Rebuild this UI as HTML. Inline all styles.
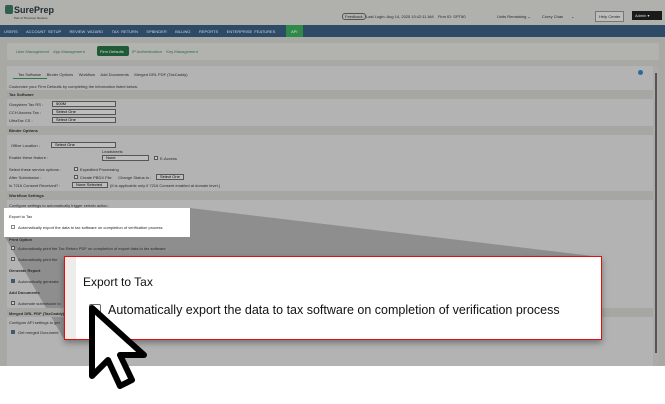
<!DOCTYPE html>
<html><head><meta charset="utf-8"><style>
*{margin:0;padding:0;box-sizing:border-box}
body{width:665px;height:404px;background:#fff;font-family:"Liberation Sans",sans-serif;position:relative;overflow:hidden}
.a{position:absolute}
.t{font-size:4px;color:#2a2a2a;white-space:nowrap}
.sel{position:absolute;height:6px;border:1px solid #555;background:#bdbdbd;font-size:4px;padding-left:3px;line-height:4px}
.cb{position:absolute;width:4px;height:4px;border:1px solid #555;background:#ccc}
</style></head><body>
<div class="a" style="left:0;top:0;width:665px;height:366px;background:#a8a8a4"></div>
<div class="a" style="left:0;top:0;width:665px;height:25px;background:#b0b0ac"></div>
<div class="a" style="left:5px;top:5px;width:8px;height:9px;border-radius:2px;background:#2f5f4f"></div>
<div class="a" style="left:14px;top:5px;font-size:9px;font-weight:bold;color:#1e2a2e">SurePrep</div>
<div class="a t" style="left:14px;top:16px;font-size:3px">Part of Thomson Reuters</div>
<div class="a t" style="left:342px;top:13px;border:1px solid #555;border-radius:3px;padding:0 2px">Feedback</div>
<div class="a t" style="left:366px;top:14px">Last Login: Aug 14, 2025 10:42:11 AM &nbsp;&nbsp; Firm ID: SPT80</div>
<div class="a t" style="left:497px;top:14px">Units Remaining ⌄ &nbsp;&nbsp;&nbsp;&nbsp;&nbsp;&nbsp;&nbsp;&nbsp; Corey Chan &nbsp;&nbsp;&nbsp;&nbsp;&nbsp; ⌄</div>
<div class="a t" style="left:595px;top:11px;border:1px solid #777;padding:2px 3px;background:#bcbcb8">Help Center</div>
<div class="a t" style="left:632px;top:11px;background:#1a1a1a;color:#ddd;padding:2px 3px;width:30px">Admin ▾</div>
<div class="a" style="left:0;top:25px;width:665px;height:12px;background:#2d4a66"></div>
<div class="a t" style="left:4px;top:29px;color:#d0d6dc;word-spacing:1px">USERS &nbsp;&nbsp; ACCOUNT SETUP &nbsp;&nbsp; REVIEW WIZARD &nbsp;&nbsp; TAX RETURN &nbsp;&nbsp; SPBINDER &nbsp;&nbsp; BILLING &nbsp;&nbsp; REPORTS &nbsp;&nbsp; ENTERPRISE FEATURES</div>
<div class="a" style="left:286px;top:25px;width:17px;height:12px;background:#2f8a4a"></div>
<div class="a t" style="left:291px;top:29px;color:#ddd">API</div>
<div class="a" style="left:7px;top:43px;width:652px;height:17px;background:#b2b2ae;border-radius:2px"></div>
<div class="a t" style="left:16px;top:49px;color:#2f6a4a">User Management &nbsp;&nbsp; App Management</div>
<div class="a" style="left:97px;top:46px;width:32px;height:10px;background:#1f5a36;border-radius:2px"></div>
<div class="a t" style="left:100px;top:49px;color:#ddd">Firm Defaults</div>
<div class="a t" style="left:132px;top:49px;color:#2f6a4a">IP Authentication &nbsp;&nbsp; Key Management</div>
<div class="a" style="left:7px;top:66px;width:646px;height:300px;background:#b3b3b3"></div>
<div class="a" style="left:653px;top:66px;width:6px;height:300px;background:#ababab"></div>
<div class="a" style="left:655px;top:73px;width:2px;height:280px;background:#555"></div>
<div class="a t" style="left:18px;top:72px">Tax Software &nbsp;&nbsp;&nbsp; Binder Options &nbsp;&nbsp;&nbsp; Workflow &nbsp;&nbsp;&nbsp; Add Documents &nbsp;&nbsp;&nbsp; Merged DRL PDF (TaxCaddy)</div>
<div class="a" style="left:13px;top:78px;width:34px;height:1px;background:#2f7a4a"></div>
<div class="a" style="left:638px;top:70px;width:5px;height:5px;border-radius:50%;background:#2a6a9a"></div>
<div class="a t" style="left:9px;top:84px">Customize your Firm Defaults by completing the information listed below.</div>
<div class="a" style="left:7px;top:90px;width:646px;height:9px;background:#a6a6a2"></div>
<div class="a t" style="left:9px;top:92px;font-weight:bold">Tax Software</div>
<div class="a t" style="left:9px;top:102px">Gosystem Tax RS :</div><div class="sel" style="left:52px;top:101px;width:64px">500M</div>
<div class="a t" style="left:9px;top:110px">CCH Axcess Tax :</div><div class="sel" style="left:52px;top:109px;width:64px">Select One</div>
<div class="a t" style="left:9px;top:118px">UltraTax CS :</div><div class="sel" style="left:52px;top:117px;width:64px">Select One</div>
<div class="a" style="left:7px;top:126px;width:646px;height:9px;background:#a6a6a2"></div>
<div class="a t" style="left:9px;top:128px;font-weight:bold">Binder Options</div>
<div class="a t" style="left:11px;top:143px">Office Location :</div><div class="sel" style="left:51px;top:142px;width:65px">Select One</div>
<div class="a t" style="left:9px;top:155px">Enable these feature :</div>
<div class="a t" style="left:102px;top:149px">Leadsheets</div><div class="sel" style="left:102px;top:155px;width:47px">None</div>
<div class="cb" style="left:154px;top:156px"></div><div class="a t" style="left:160px;top:156px">E-Access</div>
<div class="a t" style="left:9px;top:167px">Select these service options :</div>
<div class="cb" style="left:74px;top:167px"></div><div class="a t" style="left:80px;top:167px">Expedited Processing</div>
<div class="a t" style="left:9px;top:175px">After Submission :</div>
<div class="cb" style="left:74px;top:175px"></div><div class="a t" style="left:80px;top:175px">Create PBDX File &nbsp;&nbsp;&nbsp;&nbsp; Change Status to :</div>
<div class="sel" style="left:156px;top:174px;width:28px">Select One</div>
<div class="a t" style="left:9px;top:183px">Is 7216 Consent Received? :</div>
<div class="sel" style="left:72px;top:182px;width:36px">None Selected</div>
<div class="a t" style="left:110px;top:183px">(It is applicable only if 7216 Consent enabled at domain level.)</div>
<div class="a" style="left:7px;top:191px;width:646px;height:9px;background:#a6a6a2"></div>
<div class="a t" style="left:9px;top:193px;font-weight:bold">Workflow Settings</div>
<div class="a t" style="left:9px;top:203px">Configure settings to automatically trigger certain action.</div>
<svg class="a" style="left:0;top:0" width="665" height="404"><polygon points="5,237 190,208 601,257 64,339" fill="#8e8e8e"/></svg>
<div class="a t" style="left:9px;top:237px;font-weight:bold">Print Option</div>
<div class="cb" style="left:11px;top:246px"></div><div class="a t" style="left:18px;top:246px">Automatically print the Tax Return PDF on completion of export data to tax software</div>
<div class="cb" style="left:11px;top:257px"></div><div class="a t" style="left:18px;top:257px">Automatically print the</div>
<div class="a t" style="left:9px;top:268px;font-weight:bold">Generate Report</div>
<div class="cb" style="left:11px;top:279px;background:#2a5a9a"></div><div class="a t" style="left:18px;top:279px">Automatically generate</div>
<div class="a t" style="left:9px;top:290px;font-weight:bold">Add Documents</div>
<div class="cb" style="left:11px;top:301px"></div><div class="a t" style="left:18px;top:301px">Automate submission to</div>
<div class="a" style="left:7px;top:308px;width:646px;height:9px;background:#a6a6a2"></div>
<div class="a t" style="left:9px;top:311px;font-weight:bold">Merged DRL PDF (TaxCaddy)</div>
<div class="a t" style="left:9px;top:320px">Configure API settings to get</div>
<div class="cb" style="left:11px;top:330px;background:#2a5a9a"></div><div class="a t" style="left:18px;top:330px">Get merged Document</div>
<div class="a" style="left:4px;top:208px;width:186px;height:29px;background:#fff"></div>
<div class="a t" style="left:9px;top:214px;color:#222">Export to Tax</div>
<div class="cb" style="left:11px;top:225px;background:#fff;border-color:#888"></div>
<div class="a t" style="left:18px;top:225px;color:#222">Automatically export the data to tax software on completion of verification process</div>
<div class="a" style="left:64px;top:256px;width:538px;height:84px;background:#fff;border:1px solid #e01010;box-shadow:0 3px 6px rgba(0,0,0,.35)"></div>
<div class="a" style="left:65px;top:257px;width:11px;height:82px;background:#ececea"></div>
<div class="a" style="left:83px;top:275px;font-size:12px;color:#111">Export to Tax</div>
<div class="a" style="left:89px;top:304px;width:12px;height:12px;border:1px solid #666;border-radius:2px;background:#fff"></div>
<div class="a" style="left:108px;top:303px;font-size:12.5px;color:#111;white-space:nowrap">Automatically export the data to tax software on completion of verification process</div>
<svg class="a" style="left:86px;top:302px" width="70" height="88" viewBox="0 0 70 88">
<path d="M6 6 L6 74 L22 58 L34 84 L46 78 L34 53 L58 53 Z" fill="#fff" stroke="#000" stroke-width="6" stroke-linejoin="round"/>
</svg>
</body></html>
